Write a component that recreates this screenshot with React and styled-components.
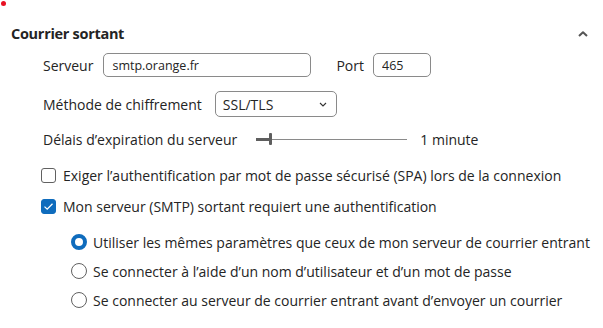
import React from "react";
import styled, { createGlobalStyle } from "styled-components";

const Global = createGlobalStyle`
  html, body { margin: 0; padding: 0; background: #ffffff; }
  body { font-family: "Open Sans", "Noto Sans", sans-serif; color: #242424; }
  * { box-sizing: border-box; }
`;

const Page = styled.div`
  position: relative;
  width: 603px;
  height: 328px;
  overflow: hidden;
  background: #fff;
`;

const Dot = styled.span`
  position: absolute;
  left: 1px;
  top: 1px;
  width: 5px;
  height: 5px;
  border-radius: 50%;
  background: #e81123;
`;

const Header = styled.div`
  display: flex;
  align-items: center;
  justify-content: space-between;
  height: 20px;
  margin-top: 24px;
  padding: 0 15px 0 11px;
`;

const Title = styled.h2`
  margin: 0;
  font-size: 14.5px;
  font-weight: 700;
  letter-spacing: -0.3px;
  color: #242424;
  line-height: 20px;
`;

const Body = styled.div`
  padding-left: 43px;
  display: flex;
  flex-direction: column;
`;

const Row = styled.div`
  display: flex;
  align-items: center;
  height: ${p => p.$h || 20}px;
  margin-top: ${p => p.$mt || 0}px;
  font-size: 14px;
`;

const Label = styled.span`
  font-size: 14px;
  color: #242424;
  margin-right: ${p => p.$gap || 12}px;
  margin-left: ${p => p.$ml || 0}px;
  white-space: nowrap;
`;

const TextInput = styled.input`
  width: ${p => p.$w}px;
  height: 24px;
  border: 1px solid #8a8a8a;
  border-radius: 5px;
  padding: 0 8px;
  font-family: inherit;
  font-size: 12.5px;
  color: #242424;
  outline: none;
`;

const SelectBox = styled.div`
  display: flex;
  align-items: center;
  justify-content: space-between;
  width: 122px;
  height: 26px;
  border: 1px solid #8a8a8a;
  border-radius: 5px;
  padding: 0 9px 0 7px;
  font-size: 14px;
  color: #242424;
`;

const Slider = styled.div`
  position: relative;
  width: 151px;
  height: 12px;
  display: flex;
  align-items: center;
  margin-right: 13px;
`;

const TrackFill = styled.div`
  width: 14px;
  height: 3px;
  background: #5e5e5e;
`;

const Track = styled.div`
  flex: 1;
  height: 1px;
  background: #8a8a8a;
`;

const Thumb = styled.div`
  position: absolute;
  left: 13px;
  top: 0;
  width: 3px;
  height: 12px;
  background: #5e5e5e;
  border-radius: 1px;
`;

const Box = styled.span`
  flex: none;
  width: 15px;
  height: 15px;
  border-radius: 3px;
  border: 1px solid ${p => (p.$checked ? "#0f6cbd" : "#616161")};
  background: ${p => (p.$checked ? "#0f6cbd" : "#fff")};
  display: flex;
  align-items: center;
  justify-content: center;
  margin-left: -2px;
  margin-right: 7px;
`;

const Radio = styled.span`
  flex: none;
  width: 16px;
  height: 16px;
  border-radius: 50%;
  border: ${p => (p.$checked ? "4.5px solid #0f6cbd" : "1px solid #616161")};
  background: #fff;
  margin-right: 6px;
`;

const RadioGroup = styled.div`
  display: flex;
  flex-direction: column;
  gap: 9px;
  margin-top: 16px;
  margin-left: 28px;
`;

const Chevron = () => (
  <svg width="10" height="6" viewBox="0 0 10 6">
    <path d="M1 5 L5 1.2 L9 5" fill="none" stroke="#555" strokeWidth="2" strokeLinejoin="round" />
  </svg>
);

const SmallChevron = () => (
  <svg width="8" height="5" viewBox="0 0 8 5">
    <path d="M1 1 L4 4 L7 1" fill="none" stroke="#333" strokeWidth="1.1" />
  </svg>
);

const Check = () => (
  <svg width="11" height="9" viewBox="0 0 11 9">
    <path d="M1.5 4.6 L4.2 7.2 L9.5 1.8" fill="none" stroke="#fff" strokeWidth="1.3" />
  </svg>
);

export default function App() {
  return (
    <Page>
      <Global />
      <Dot />
      <Header>
        <Title>Courrier sortant</Title>
        <Chevron />
      </Header>
      <Body>
        <Row $h={24} $mt={9}>
          <Label $gap={10}>Serveur</Label>
          <TextInput $w={208} defaultValue="smtp.orange.fr" />
          <Label $ml={25} $gap={9}>Port</Label>
          <TextInput $w={58} defaultValue="465" />
        </Row>
        <Row $h={26} $mt={14}>
          <Label $gap={13}>Méthode de chiffrement</Label>
          <SelectBox>
            <span>SSL/TLS</span>
            <SmallChevron />
          </SelectBox>
        </Row>
        <Row $h={20} $mt={12}>
          <Label $gap={19}>Délais d’expiration du serveur</Label>
          <Slider>
            <TrackFill />
            <Track />
            <Thumb />
          </Slider>
          <Label>1 minute</Label>
        </Row>
        <Row $h={20} $mt={16}>
          <Box />
          <Label>Exiger l’authentification par mot de passe sécurisé (SPA) lors de la connexion</Label>
        </Row>
        <Row $h={20} $mt={11}>
          <Box $checked>
            <Check />
          </Box>
          <Label>Mon serveur (SMTP) sortant requiert une authentification</Label>
        </Row>
        <RadioGroup>
          <Row $h={20}>
            <Radio $checked />
            <Label>Utiliser les mêmes paramètres que ceux de mon serveur de courrier entrant</Label>
          </Row>
          <Row $h={20}>
            <Radio />
            <Label>Se connecter à l’aide d’un nom d’utilisateur et d’un mot de passe</Label>
          </Row>
          <Row $h={20}>
            <Radio />
            <Label>Se connecter au serveur de courrier entrant avant d’envoyer un courrier</Label>
          </Row>
        </RadioGroup>
      </Body>
    </Page>
  );
}
